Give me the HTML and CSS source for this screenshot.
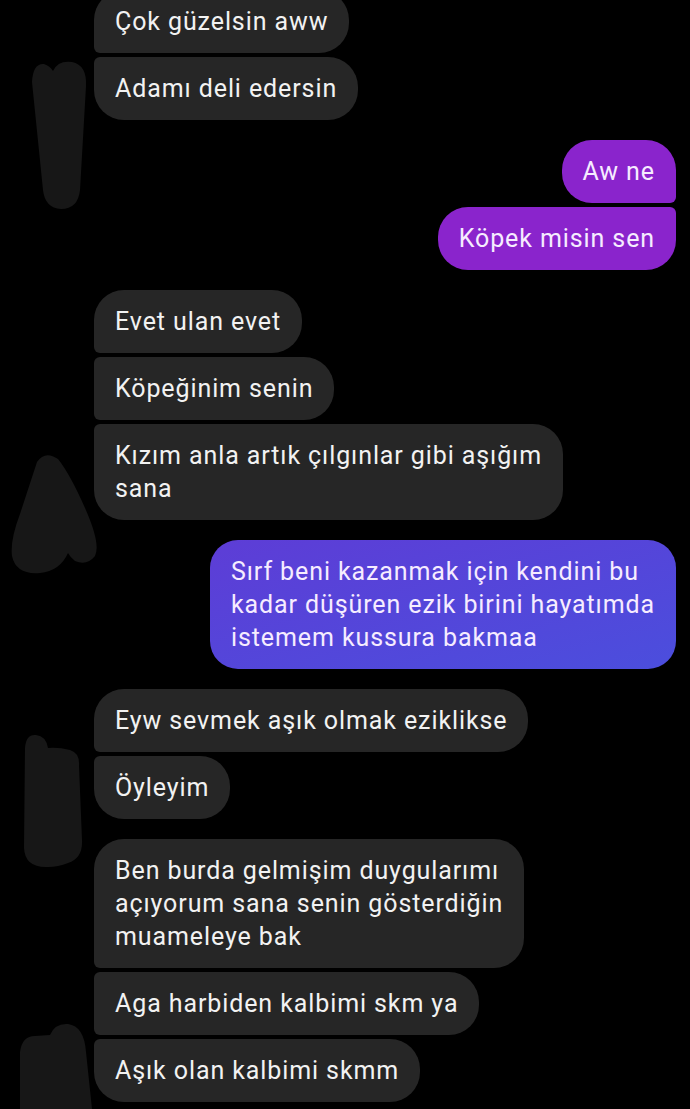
FILE: index.html
```html
<!DOCTYPE html>
<html lang="tr">
<head>
    <meta charset="UTF-8">
    <meta name="viewport" content="width=device-width, initial-scale=1.0">
    <title>Sohbet</title>
    <link rel="stylesheet" href="styles.css">
</head>
<body>
    <div class="chat">
        <!-- scribbled-out avatars -->
        <svg class="scribbles" width="110" height="1109" viewBox="0 0 110 1109">
            <path d="M32 82 Q33 63 44 64 Q50 66 53 71 Q58 60 72 62 Q87 65 86 86 L80 190 Q78 209 61 209 Q45 208 43 190 Z"/>
            <path d="M37 462 Q45 450 58 459 Q70 474 85 508 Q101 544 95 556 Q87 566 75 561 Q70 557 68 553 Q60 571 40 573 Q16 575 12 556 Q10 540 20 514 Z"/>
            <path d="M25 748 Q26 734 36 735 Q46 736 48 748 Q58 747 70 750 Q80 753 79 766 L82 840 Q83 858 68 863 Q58 867 48 867 Q25 868 24 848 Z"/>
            <path d="M20 1109 L20 1052 Q22 1036 35 1036 L50 1035 Q55 1023 68 1024 Q84 1026 86 1052 L92 1109 Z"/>
        </svg>

        <div class="group in">
            <div class="bubble first">Çok güzelsin aww</div>
            <div class="bubble last">Adamı deli edersin</div>
        </div>

        <div class="group out">
            <div class="bubble first violet">Aw ne</div>
            <div class="bubble last violet">Köpek misin sen</div>
        </div>

        <div class="group in">
            <div class="bubble first">Evet ulan evet</div>
            <div class="bubble">Köpeğinim senin</div>
            <div class="bubble last">Kızım anla artık çılgınlar gibi aşığım<br>sana</div>
        </div>

        <div class="group out">
            <div class="bubble first last indigo">Sırf beni kazanmak için kendini bu<br>kadar düşüren ezik birini hayatımda<br>istemem kussura bakmaa</div>
        </div>

        <div class="group in">
            <div class="bubble first">Eyw sevmek aşık olmak eziklikse</div>
            <div class="bubble last">Öyleyim</div>
        </div>

        <div class="group in">
            <div class="bubble first">Ben burda gelmişim duygularımı<br>açıyorum sana senin gösterdiğin<br>muameleye bak</div>
            <div class="bubble">Aga harbiden kalbimi skm ya</div>
            <div class="bubble last">Aşık olan kalbimi skmm</div>
        </div>
    </div>
</body>
</html>
```

FILE: styles.css
```css
html, body {
    margin: 0;
    background: #000000;
    height: 100%;
    overflow: hidden;
}

body {
    font-family: Roboto, "Liberation Sans", sans-serif;
}

.chat {
    position: relative;
    display: flex;
    flex-direction: column;
    gap: 20px;
    margin-top: -10px;
}

.scribbles {
    position: absolute;
    left: 0;
    top: 10px;
}

.scribbles path {
    fill: #171717;
}

.group {
    display: flex;
    flex-direction: column;
    gap: 4px;
}

.group.in {
    align-items: flex-start;
    padding-left: 94px;
}

.group.out {
    align-items: flex-end;
    padding-right: 14px;
}

.bubble {
    font-size: 25px;
    letter-spacing: 0.9px;
    line-height: 33px;
    padding: 15px 21px 15px 21px;
    white-space: nowrap;
    color: #f2f2f2;
    background: #262626;
    border-radius: 30px;
}

/* received: the left side is squared off inside a group */
.in .bubble {
    border-top-left-radius: 6px;
    border-bottom-left-radius: 6px;
}
.in .bubble.first {
    border-top-left-radius: 30px;
}
.in .bubble.last {
    border-bottom-left-radius: 30px;
}

/* sent: the right side is squared off inside a group */
.out .bubble {
    border-top-right-radius: 6px;
    border-bottom-right-radius: 6px;
    color: #f6ecff;
}
.out .bubble.first {
    border-top-right-radius: 30px;
}
.out .bubble.last {
    border-bottom-right-radius: 30px;
}

.violet {
    background: #8a24cc;
}

.indigo {
    background: linear-gradient(165deg, #5d3dd6 0%, #4b4edd 100%);
    border-radius: 28px !important;
}
```
